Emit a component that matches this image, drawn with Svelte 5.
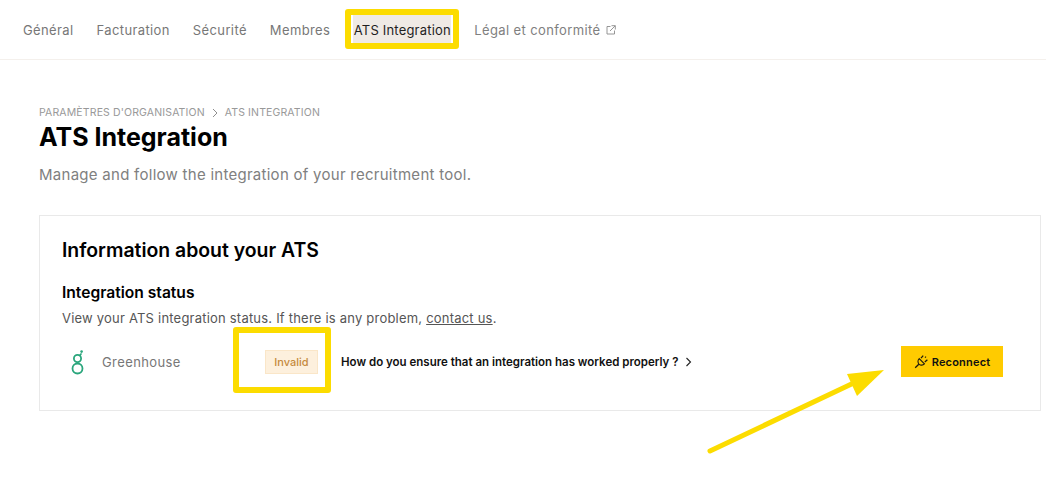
<script>
  const tabs = ['Général', 'Facturation', 'Sécurité', 'Membres'];
</script>

<div class="page">
  <nav class="tabs">
    {#each tabs as tab}
      <span class="tab">{tab}</span>
    {/each}
    <span class="tab active">ATS Integration</span>
    <span class="tab ext">Légal et conformité
      <svg width="10" height="10" viewBox="0 0 10 10" fill="none" stroke="#8a8a8a" stroke-width="0.9">
        <path d="M4.5 1.5H1v7.5h7.5V5.5M5.5 0.7h3.8v3.8M9.2 0.8L4 6" />
      </svg>
    </span>
  </nav>

  <main class="content">
    <div class="crumbs">
      <span>PARAMÈTRES D'ORGANISATION</span>
      <svg width="8" height="10" viewBox="0 0 8 10" fill="none" stroke="#8f8f8f" stroke-width="1"><path d="M2 1l4 4-4 4" /></svg>
      <span>ATS INTEGRATION</span>
    </div>
    <h1>ATS Integration</h1>
    <p class="lead">Manage and follow the integration of your recruitment tool.</p>

    <section class="card">
      <h2>Information about your ATS</h2>
      <h3>Integration status</h3>
      <p class="help">View your ATS integration status. If there is any problem, <u>contact us</u>.</p>
      <div class="row">
        <svg class="logo" width="14" height="26" viewBox="0 0 14 26" fill="none" stroke="#2aa67c" stroke-width="1.8">
          <circle cx="6.5" cy="9.5" r="3.6" />
          <circle cx="6.5" cy="19.5" r="5" />
          <path d="M6.5 13.2v1.4M8.6 6.6c.9-.6 1.4-1.3 1.6-2.2" />
          <circle cx="10.6" cy="2.6" r="1.3" fill="#2aa67c" stroke="none" />
        </svg>
        <span class="name">Greenhouse</span>
        <span class="badge">Invalid</span>
        <span class="howto">How do you ensure that an integration has worked properly ?</span>
        <svg class="chev" width="7" height="10" viewBox="0 0 7 10" fill="none" stroke="#222" stroke-width="1.1"><path d="M1.5 1l4 4-4 4" /></svg>
        <button class="reconnect">
          <svg width="15" height="15" viewBox="0 0 15 15" fill="none" stroke="#1c1a10" stroke-width="1.1">
            <path d="M5.2 4.6L10.4 9.8C9 11.4 6.6 11.6 5 10.1 3.5 8.6 3.7 6 5.2 4.6Z" />
            <path d="M7 4.2L9.2 1.6M10.8 8L13.4 5.8M4.8 10.2L1.2 13.8" stroke-width="1.3" />
            <path d="M11 3.6l1-1" />
          </svg>
          Reconnect
        </button>
      </div>
    </section>
  </main>

  <div class="mark mark-tab"></div>
  <div class="mark mark-badge"></div>
  <svg class="arrow" width="190" height="100" viewBox="0 0 190 100" fill="none">
    <path d="M10 91L160 20" stroke="#fcdc00" stroke-width="5" stroke-linecap="round" />
    <path d="M147 14L184 10L157 36Z" fill="#fcdc00" />
  </svg>
</div>

<style>
  :global(body) {
    margin: 0;
    background: #fff;
  }
  .page {
    position: relative;
    width: 1046px;
    height: 490px;
    overflow: hidden;
    font-family: Inter, "Open Sans", sans-serif;
    color: #0a0a0a;
  }
  .tabs {
    height: 60px;
    box-sizing: border-box;
    border-bottom: 1px solid #f4f0ec;
    display: flex;
    align-items: center;
    padding-left: 23px;
    gap: 23px;
    font-size: 13px;
    letter-spacing: 0.38px;
    color: #777;
  }
  .tab {
    white-space: nowrap;
  }
  .active {
    box-sizing: border-box;
    background: #efeae5;
    color: #1f1f1f;
    height: 30px;
    line-height: 30px;
    width: 98px;
    text-align: center;
    letter-spacing: 0.2px;
  }
  .ext {
    color: #808080;
    display: flex;
    align-items: center;
    gap: 5px;
    letter-spacing: 0.38px;
  }
  .content {
    padding: 46px 5px 0 39px;
  }
  .crumbs {
    display: flex;
    align-items: center;
    gap: 6px;
    font-size: 10.5px;
    line-height: 14px;
    color: #999;
    letter-spacing: 0.14px;
  }
  h1 {
    margin: -1px 0 0;
    font-size: 25px;
    line-height: 36px;
    font-weight: 700;
    color: #000;
  }
  .lead {
    margin: 10px 0 0;
    font-size: 15px;
    line-height: 20px;
    color: #808080;
    letter-spacing: 0.27px;
  }
  .card {
    margin-top: 30px;
    height: 196px;
    box-sizing: border-box;
    border: 1px solid #e9e9e9;
    padding: 21px 37px 0 22px;
  }
  h2 {
    margin: 0;
    font-size: 19.4px;
    line-height: 26px;
    font-weight: 600;
    color: #000;
  }
  h3 {
    margin: 20px 0 0;
    font-size: 15.6px;
    line-height: 20px;
    font-weight: 600;
    color: #000;
  }
  .help {
    margin: 6px 0 0;
    font-size: 13px;
    line-height: 18px;
    color: #555;
    letter-spacing: 0.21px;
  }
  .row {
    margin-top: 19px;
    height: 31px;
    display: flex;
    align-items: center;
  }
  .logo {
    margin-left: 8.5px;
    flex: none;
  }
  .name {
    margin-left: 17.5px;
    width: 163px;
    font-size: 13px;
    color: #777;
    letter-spacing: 0.4px;
  }
  .badge {
    box-sizing: border-box;
    width: 53px;
    height: 24px;
    line-height: 22px;
    text-align: center;
    background: #fdf0dd;
    border: 1px solid #fae6c8;
    color: #c58a3c;
    font-size: 11px;
    font-weight: 500;
  }
  .howto {
    margin-left: 23px;
    font-size: 11.5px;
    font-weight: 600;
    color: #111;
  }
  .chev {
    margin-left: 7px;
  }
  .reconnect {
    margin-left: auto;
    width: 102px;
    height: 31px;
    border: 0;
    background: #ffcb00;
    color: #111;
    font: 600 11px Inter, sans-serif;
    letter-spacing: 0.2px;
    display: flex;
    align-items: center;
    justify-content: center;
    gap: 3px;
    padding: 0;
  }
  .mark {
    position: absolute;
    box-sizing: border-box;
    border: 6px solid #fcdc00;
    border-radius: 3px;
  }
  .mark-tab {
    left: 345px;
    top: 9px;
    width: 114px;
    height: 40px;
  }
  .mark-badge {
    left: 233px;
    top: 327px;
    width: 98px;
    height: 66px;
  }
  .arrow {
    position: absolute;
    left: 700px;
    top: 360px;
  }
</style>
